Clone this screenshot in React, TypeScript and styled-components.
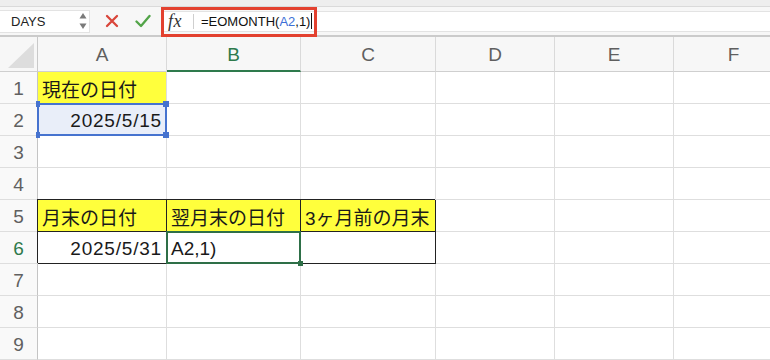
import styled, { createGlobalStyle, css } from "styled-components";

const GlobalStyle = createGlobalStyle`
    * { box-sizing: border-box; }
    html, body {
        margin: 0;
        padding: 0;
        background: #fff;
    }
    body {
        font-family: "Liberation Sans", "Noto Sans CJK JP", sans-serif;
        overflow: hidden;
    }
`;

const Page = styled.div`
    width: 770px;
    height: 360px;
    overflow: hidden;
    display: flex;
    flex-direction: column;
    background: #fff;
`;

const TopStrip = styled.div`
    height: 7px;
    background: #eeeeee;
    border-bottom: 1px solid #dadada;
`;

const Bar = styled.div`
    position: relative;
    height: 30px;
    display: flex;
    align-items: center;
    background: #f7f7f7;
    border-bottom: 2px solid #cbcbcb;
`;

const NameBox = styled.div`
    width: 90px;
    height: 23px;
    background: #fff;
    border: 1px solid #e3e3e3;
    border-left: none;
    display: flex;
    align-items: center;
    justify-content: space-between;
    padding: 0 2px 0 11px;
    font-size: 13px;
    color: #222;
`;

const Actions = styled.div`
    width: 71px;
    display: flex;
    align-items: center;
    gap: 16px;
    padding-left: 15px;
`;

const FormulaField = styled.div`
    flex: 1;
    height: 21px;
    background: #fff;
    border-top: 1px solid #e3e3e3;
    border-bottom: 1px solid #e3e3e3;
    display: flex;
    align-items: center;
    padding-left: 7px;
`;

const Fx = styled.span`
    font-family: "Liberation Serif", serif;
    font-style: italic;
    font-size: 18px;
    color: #333;
    width: 24px;
    letter-spacing: 0.5px;
`;

const Divider = styled.span`
    width: 1px;
    height: 15px;
    background: #cfcfcf;
    margin: 0 7px 0 1px;
`;

const FormulaText = styled.span`
    font-size: 13px;
    color: #111;
    display: flex;
    align-items: center;
`;

const Ref = styled.span`
    color: #3d6fd6;
`;

const Caret = styled.span`
    width: 1px;
    height: 16px;
    background: #111;
    margin-left: 1px;
`;

const Highlight = styled.div`
    position: absolute;
    left: 161px;
    top: 0;
    width: 156px;
    height: 30px;
    border: 3px solid #e3412f;
    pointer-events: none;
`;

const Sheet = styled.div`
    flex: 1;
    display: grid;
    grid-template-columns: 38px 129px 134px 135px 119px 119px 120px;
    grid-template-rows: 35px repeat(9, 32px);
`;

const Corner = styled.div`
    background: #f7f7f7;
    border-right: 1px solid #c9c9c9;
    border-bottom: 1px solid #cfcfcf;
    display: flex;
    align-items: flex-end;
    justify-content: flex-end;
    padding: 0 3px 3px 0;
`;

const ColHead = styled.div<{ $active?: boolean }>`
    background: #f7f7f7;
    border-right: 1px solid #dadada;
    border-bottom: 1px solid #cfcfcf;
    display: flex;
    align-items: center;
    justify-content: center;
    padding-top: 2px;
    font-size: 19px;
    color: #5f5f5f;
    ${p =>
        p.$active &&
        css`
            color: #2e7a4c;
            border-bottom: 2px solid #2e7a4c;
        `}
`;

const RowHead = styled.div<{ $active?: boolean }>`
    background: #f9f9f9;
    border-right: 1px solid #c4c4c4;
    border-bottom: 1px solid #dedede;
    display: flex;
    align-items: center;
    justify-content: center;
    padding-top: 2px;
    font-size: 19px;
    color: ${p => (p.$active ? "#2e7a4c" : "#606060")};
`;

const Cell = styled.div<{ $fill?: string; $right?: boolean; $boxed?: boolean }>`
    position: relative;
    background: ${p => p.$fill ?? "#fff"};
    border-right: 1px solid #dedede;
    border-bottom: 1px solid #dedede;
    display: flex;
    align-items: center;
    justify-content: ${p => (p.$right ? "flex-end" : "flex-start")};
    padding: 2px 4px 0 4px;
    font-size: 19px;
    color: #1a1a1a;
    white-space: nowrap;
    ${p =>
        p.$boxed &&
        css`
            border-color: #222;
            box-shadow: -1px -1px 0 #222;
        `}
`;

const Num = styled.span`
    letter-spacing: 0.8px;
`;

const Frame = styled.div<{ $color: string }>`
    position: absolute;
    top: -1px;
    left: -1px;
    right: -1px;
    bottom: -1px;
    border: 2px solid ${p => p.$color};
    pointer-events: none;
    z-index: 2;
`;

const Handle = styled.span<{ $color: string; $w?: number }>`
    position: absolute;
    width: ${p => p.$w ?? 6}px;
    height: 6px;
    background: ${p => p.$color};
`;

const BLUE = "#4673cf";
const GREEN = "#2e6f47";
const YELLOW = "#ffff3c";

const columns = ["A", "B", "C", "D", "E", "F"];

function Stepper() {
    return (
        <svg width="8" height="18" viewBox="0 0 8 18">
            <path d="M4 1 L7.5 6.5 H0.5 Z" fill="#7a7a7a" />
            <path d="M4 17 L7.5 11.5 H0.5 Z" fill="#7a7a7a" />
        </svg>
    );
}

function CancelIcon() {
    return (
        <svg width="14" height="14" viewBox="0 0 14 14">
            <path d="M2 2 L12 12 M12 2 L2 12" stroke="#d9463b" strokeWidth="2.3" strokeLinecap="round" />
        </svg>
    );
}

function ConfirmIcon() {
    return (
        <svg width="16" height="14" viewBox="0 0 16 14">
            <path
                d="M1.5 7.5 L6 12 L14.5 2"
                stroke="#52a448"
                strokeWidth="2.3"
                fill="none"
                strokeLinecap="round"
                strokeLinejoin="round"
            />
        </svg>
    );
}

function CornerMark() {
    return (
        <svg width="26" height="25" viewBox="0 0 26 25">
            <path d="M26 0 V25 H0 Z" fill="#dddddd" />
        </svg>
    );
}

function App() {
    const empty = (key: string) => <Cell key={key} />;

    const row = (n: number, cells: React.ReactNode[], active = false) => [
        <RowHead key={`r${n}`} $active={active}>
            {n}
        </RowHead>,
        ...cells,
    ];

    const blanks = (n: number, from: number) =>
        Array.from({ length: 6 - from }, (_, i) => empty(`${n}-${from + i}`));

    return (
        <Page>
            <GlobalStyle />
            <TopStrip />
            <Bar>
                <NameBox>
                    DAYS
                    <Stepper />
                </NameBox>
                <Actions>
                    <CancelIcon />
                    <ConfirmIcon />
                </Actions>
                <FormulaField>
                    <Fx>fx</Fx>
                    <Divider />
                    <FormulaText>
                        =EOMONTH(<Ref>A2</Ref>,1)
                        <Caret />
                    </FormulaText>
                </FormulaField>
                <Highlight />
            </Bar>
            <Sheet>
                <Corner>
                    <CornerMark />
                </Corner>
                {columns.map(c => (
                    <ColHead key={c} $active={c === "B"}>
                        {c}
                    </ColHead>
                ))}

                {row(1, [
                    <Cell key="a1" $fill={YELLOW}>
                        現在の日付
                    </Cell>,
                    ...blanks(1, 1),
                ])}

                {row(2, [
                    <Cell key="a2" $fill="#e9eef9" $right>
                        <Num>2025/5/15</Num>
                        <Frame $color={BLUE}>
                            <Handle $color={BLUE} $w={4} style={{ top: -4, left: -3 }} />
                            <Handle $color={BLUE} style={{ top: -4, right: -4 }} />
                            <Handle $color={BLUE} $w={4} style={{ bottom: -4, left: -3 }} />
                            <Handle $color={BLUE} style={{ bottom: -4, right: -4 }} />
                        </Frame>
                    </Cell>,
                    ...blanks(2, 1),
                ])}

                {row(3, blanks(3, 0))}
                {row(4, blanks(4, 0))}

                {row(5, [
                    <Cell key="a5" $fill={YELLOW} $boxed>
                        月末の日付
                    </Cell>,
                    <Cell key="b5" $fill={YELLOW} $boxed>
                        翌月末の日付
                    </Cell>,
                    <Cell key="c5" $fill={YELLOW} $boxed>
                        3ヶ月前の月末
                    </Cell>,
                    ...blanks(5, 3),
                ])}

                {row(
                    6,
                    [
                        <Cell key="a6" $boxed $right>
                            <Num>2025/5/31</Num>
                        </Cell>,
                        <Cell key="b6" $boxed>
                            A2,1)
                            <Frame $color={GREEN}>
                                <Handle $color={GREEN} $w={5} style={{ bottom: -4, right: -4, height: 5 }} />
                            </Frame>
                        </Cell>,
                        <Cell key="c6" $boxed />,
                        ...blanks(6, 3),
                    ],
                    true,
                )}

                {row(7, blanks(7, 0))}
                {row(8, blanks(8, 0))}
                {row(9, blanks(9, 0))}
            </Sheet>
        </Page>
    );
}

export default App;
